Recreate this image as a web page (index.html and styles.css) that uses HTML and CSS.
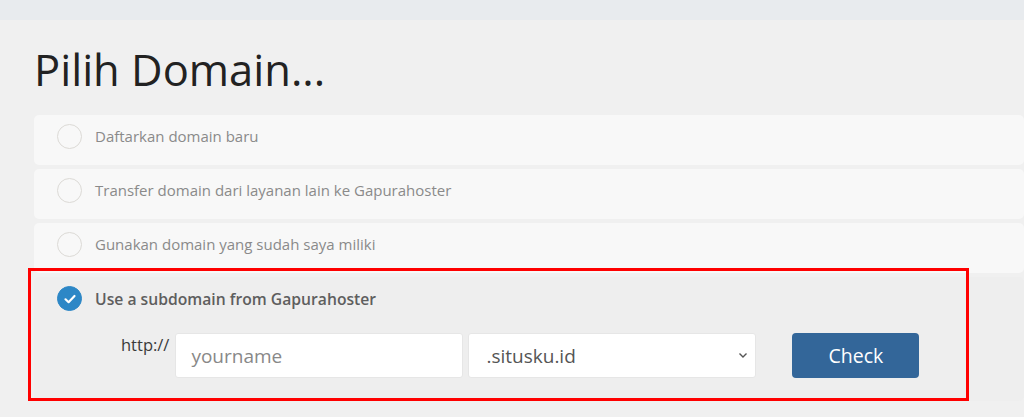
FILE: index.html
```html
<!DOCTYPE html>
<html lang="id">
<head>
    <meta charset="UTF-8">
    <title>Pilih Domain</title>
    <link rel="stylesheet" href="styles.css">
</head>
<body>
    <div class="topbar"></div>

    <main class="content">
        <h1>Pilih Domain...</h1>

        <div class="options">
            <label class="option">
                <span class="radio"></span>
                <span class="option-text">Daftarkan domain baru</span>
            </label>
            <label class="option">
                <span class="radio"></span>
                <span class="option-text">Transfer domain dari layanan lain ke Gapurahoster</span>
            </label>
            <label class="option">
                <span class="radio"></span>
                <span class="option-text">Gunakan domain yang sudah saya miliki</span>
            </label>

            <!-- Selected option: subdomain -->
            <div class="option option-selected">
                <div class="option-head">
                    <span class="radio radio-checked">
                        <svg width="14" height="14" viewBox="0 0 14 14"><path d="M2.5 7.3 L5.6 10.2 L11.5 4" fill="none" stroke="#fff" stroke-width="2.2" stroke-linecap="round" stroke-linejoin="round"/></svg>
                    </span>
                    <span class="option-title">Use a subdomain from Gapurahoster</span>
                </div>
                <div class="subdomain-row">
                    <span class="prefix">http://</span>
                    <input type="text" class="field" placeholder="yourname">
                    <div class="select-box">
                        <span>.situsku.id</span>
                        <svg width="10" height="7" viewBox="0 0 10 7"><path d="M1.5 1.5 L5 5 L8.5 1.5" fill="none" stroke="#555" stroke-width="1.4"/></svg>
                    </div>
                    <button class="check-button">Check</button>
                </div>
                <!-- red highlight drawn over the selected option -->
                <div class="highlight"></div>
            </div>
        </div>
    </main>
</body>
</html>
```

FILE: styles.css
```css
body {
    margin: 0;
    background: #f0f0f0;
    font-family: 'Open Sans', sans-serif;
    overflow: hidden;
}

.topbar {
    height: 20px;
    background: #e8ebee;
}

.content {
    padding-left: 34px;
}

h1 {
    margin: 0;
    padding-top: 20px;
    font-size: 43.5px;
    font-weight: 400;
    line-height: 60px;
    color: #222;
}

.options {
    margin-top: 15px;
    display: flex;
    flex-direction: column;
    gap: 4px;
}

.option {
    display: flex;
    align-items: center;
    box-sizing: border-box;
    height: 50px;
    background: #f8f8f8;
    border-radius: 5px;
    padding: 0 0 8px 23px;
}

.radio {
    width: 23px;
    height: 23px;
    border: 1.5px solid #dcdad6;
    border-radius: 50%;
    flex-shrink: 0;
    display: flex;
    align-items: center;
    justify-content: center;
}

.option-text {
    margin-left: 13px;
    font-size: 15px;
    color: #8a8a8a;
}

/* Selected option */
.option-selected {
    position: relative;
    display: block;
    height: auto;
    background: #eeeeee;
    padding: 9px 0 23px 23px;
}

.option-head {
    display: flex;
    align-items: center;
}

.radio-checked {
    background: #2d87c6;
    border-color: #2d87c6;
}

.option-title {
    margin-left: 13px;
    font-size: 15.7px;
    font-weight: 600;
    color: #5e5e5e;
}

.subdomain-row {
    display: flex;
    align-items: flex-start;
    margin-top: 22px;
    margin-left: 64px;
}

.prefix {
    font-size: 16.5px;
    color: #3a3a3a;
    margin-top: 0;
    margin-right: 6px;
}

.field {
    width: 288px;
    height: 45px;
    box-sizing: border-box;
    border: 1px solid #e6e6e6;
    border-radius: 3px;
    background: #fff;
    padding: 0 15px;
    font-family: 'Open Sans', sans-serif;
    font-size: 19px;
    color: #555;
    outline: none;
}

.field::placeholder {
    color: #888;
}

.select-box {
    width: 288px;
    height: 45px;
    box-sizing: border-box;
    margin-left: 5px;
    border: 1px solid #e6e6e6;
    border-radius: 3px;
    background: #fff;
    padding: 0 7px 0 17px;
    display: flex;
    align-items: center;
    justify-content: space-between;
    font-size: 19px;
    color: #555;
}

.check-button {
    margin-left: 36px;
    width: 127px;
    height: 45px;
    border: none;
    border-radius: 4px;
    background: #336699;
    color: #fff;
    font-family: 'Open Sans', sans-serif;
    font-size: 19.5px;
    cursor: pointer;
}

.highlight {
    position: absolute;
    left: -6px;
    top: -9px;
    width: 935px;
    height: 127px;
    border: 3px solid #ff0000;
    pointer-events: none;
}
```
